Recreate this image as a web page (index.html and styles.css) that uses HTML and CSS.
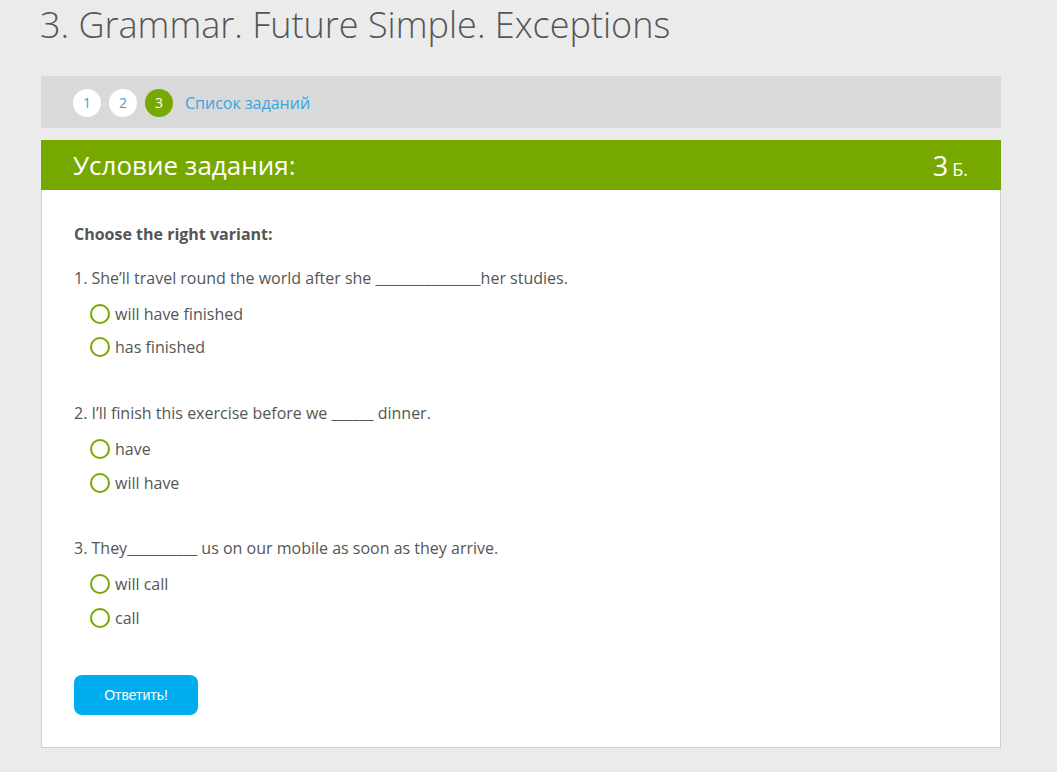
FILE: index.html
```html
<!DOCTYPE html>
<html lang="ru">
<head>
<meta charset="utf-8">
<title>3. Grammar. Future Simple. Exceptions</title>
<link rel="stylesheet" href="styles.css">
</head>
<body>
<div class="page">
  <h1 class="title">3. Grammar. Future Simple. Exceptions</h1>
  <nav class="steps">
    <span class="step">1</span>
    <span class="step">2</span>
    <span class="step active">3</span>
    <a class="list-link" href="#">Список заданий</a>
  </nav>
  <div class="task-head">
    <span class="task-title">Условие задания:</span>
    <span class="score"><span class="score-num">3</span> <span class="score-unit">Б.</span></span>
  </div>
  <div class="card">
    <p class="lead">Choose the right variant:</p>
    <div class="question">
      <p class="q-text">1. She’ll travel round the world after she _______________her studies.</p>
      <label class="option"><span class="radio"></span>will have finished</label>
      <label class="option"><span class="radio"></span>has finished</label>
    </div>
    <div class="question">
      <p class="q-text">2. I’ll finish this exercise before we ______ dinner.</p>
      <label class="option"><span class="radio"></span>have</label>
      <label class="option"><span class="radio"></span>will have</label>
    </div>
    <div class="question">
      <p class="q-text">3. They__________ us on our mobile as soon as they arrive.</p>
      <label class="option"><span class="radio"></span>will call</label>
      <label class="option"><span class="radio"></span>call</label>
    </div>
    <button class="submit" type="button">Ответить!</button>
  </div>
</div>
</body>
</html>
```

FILE: styles.css
```css
html, body {
  margin: 0;
  padding: 0;
  background: #ebebeb;
}
body {
  font-family: "Open Sans", "Noto Sans", sans-serif;
  color: #555;
}
.page {
  width: 960px;
  margin-left: 41px;
}
.title {
  margin: 0 0 26px -1px;
  font-size: 36px;
  font-weight: 300;
  line-height: 50px;
  color: #555;
}
.steps {
  display: flex;
  align-items: center;
  height: 52px;
  padding-left: 32px;
  padding-top: 1px;
  box-sizing: border-box;
  background: #d9d9d9;
}
.step {
  display: flex;
  align-items: center;
  justify-content: center;
  width: 28px;
  height: 28px;
  margin-right: 8px;
  border-radius: 50%;
  background: #fff;
  color: #3c9fd6;
  font-size: 14px;
}
.step.active {
  background: #76a800;
  color: #fff;
  margin-right: 12px;
}
.list-link {
  color: #3aa3e0;
  font-size: 16px;
  text-decoration: none;
}
.task-head {
  display: flex;
  align-items: center;
  justify-content: space-between;
  height: 50px;
  margin-top: 12px;
  padding: 0 33px 0 32px;
  background: #76a800;
  color: #fff;
}
.task-title {
  font-size: 26px;
  font-weight: 400;
}
.score-num {
  font-size: 27px;
}
.score-unit {
  font-size: 18px;
}
.card {
  background: #fff;
  border: 1px solid #cfcfcf;
  border-top: none;
  padding: 33px 32px 32px 32px;
}
.lead {
  margin: 0 0 22px 0;
  font-size: 16px;
  font-weight: 700;
  line-height: 22px;
}
.question {
  margin-bottom: 38px;
}
.q-text {
  margin: 0 0 8px 0;
  font-size: 16px;
  line-height: 22px;
}
.option {
  display: flex;
  align-items: center;
  height: 33.6px;
  padding-left: 16px;
  font-size: 16px;
}
.radio {
  width: 16px;
  height: 16px;
  margin-right: 5px;
  border: 2px solid #76a800;
  border-radius: 50%;
}
.submit {
  display: block;
  width: 124px;
  height: 40px;
  margin-top: 40px;
  border: none;
  border-radius: 8px;
  background: #00adef;
  color: #fff;
  font-family: "Liberation Sans", Arial, sans-serif;
  font-size: 14px;
}
```
